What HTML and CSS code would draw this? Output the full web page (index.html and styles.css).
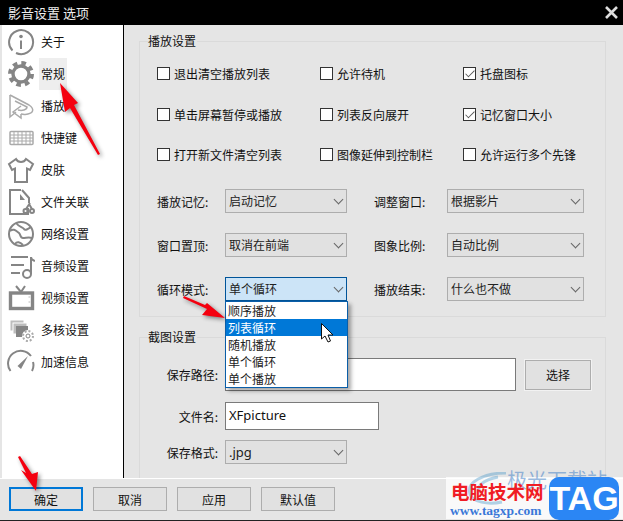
FILE: index.html
```html
<!DOCTYPE html>
<html lang="zh-CN">
<head>
    <meta charset="UTF-8">
    <meta name="viewport" content="width=device-width, initial-scale=1.0">
    <title>影音设置 选项</title>
    <link rel="stylesheet" href="styles.css">
</head>
<body>
    <div class="window">
        <div class="titlebar">
            <span class="title">影音设置 选项</span>
            <svg class="close" width="13" height="13" viewBox="0 0 13 13"><path d="M1 1L12 12M12 1L1 12"/></svg>
        </div>

        <div class="main">
            <!-- 左侧菜单 -->
            <ul class="sidebar">
                <li>
                    <svg class="icon" viewBox="0 0 28 28"><path d="M5.5 22.5A12 12 0 1 1 9 25"/><circle class="fill" cx="14" cy="8.5" r="1.8"/><path d="M14 12.5V21"/></svg>
                    <span>关于</span>
                </li>
                <li>
                    <svg class="icon" viewBox="0 0 28 28"><circle class="thick" cx="14" cy="14" r="8"/><circle class="teeth" cx="14" cy="14" r="11"/></svg>
                    <span class="active">常规</span>
                </li>
                <li>
                    <svg class="icon pale" viewBox="0 0 28 28"><path d="M3 3V25L9 20"/><path d="M3 3L22 13C28 17 26 21 21 22C18 23 16 22 14 22"/><path d="M8 9L20 15C20 18 15 19 11 18"/><path d="M14 14L6 20L14 26V22"/></svg>
                    <span>播放</span>
                </li>
                <li>
                    <svg class="icon pale" viewBox="0 0 28 28"><rect x="3" y="7.5" width="23" height="13" rx="1"/><path class="thin" d="M3 11H26M3 14H26M3 17H26M7 8V20M11 8V20M15 8V20M19 8V20M23 8V20"/></svg>
                    <span>快捷键</span>
                </li>
                <li>
                    <svg class="icon" viewBox="0 0 28 28"><path d="M9 3L2 8L5 14L8 12.5V26H20V12.5L23 14L26 8L19 3C17 7 11 7 9 3Z"/></svg>
                    <span>皮肤</span>
                </li>
                <li>
                    <svg class="icon" viewBox="0 0 28 28"><path d="M14 2H3V26H21V20"/><path d="M15 2L22 10V15"/><path class="fill" d="M13 6L18 12H13Z"/><circle cx="18.5" cy="23" r="2"/><circle cx="25" cy="23" r="2"/><path d="M19 21L23 15M25 21L22 16"/></svg>
                    <span>文件关联</span>
                </li>
                <li>
                    <svg class="icon" viewBox="0 0 28 28"><circle cx="14" cy="14" r="12"/><path d="M3 11C7 8 9 11 12 13C14 15 13 18 16 18C19 18 22 17 25 18"/><path d="M9 3C12 7 16 7 17 9C18 11 21 9 24 7"/><path d="M8 24C10 21 13 22 16 25"/></svg>
                    <span>网络设置</span>
                </li>
                <li>
                    <svg class="icon" viewBox="0 0 28 28"><path d="M4 5H21M4 13H17M4 21H13"/><circle cx="20" cy="22" r="4"/><path d="M24 22V5C24 8 26 8 28 9"/></svg>
                    <span>音频设置</span>
                </li>
                <li>
                    <svg class="icon" viewBox="0 0 28 28"><rect class="thick" x="3.5" y="9" width="22" height="15.5"/><path d="M9 2L14 8L18 2"/><path class="light" d="M22.5 12V14M22.5 17V19"/></svg>
                    <span>视频设置</span>
                </li>
                <li>
                    <svg class="icon" viewBox="0 0 28 28"><rect class="pale-fill" x="3" y="4" width="14" height="11"/><rect class="pale-fill" x="6" y="7" width="14" height="11"/><rect class="fill" x="9" y="10" width="12" height="11"/><circle class="gear-bg" cx="21" cy="20" r="6"/><circle class="teeth small" cx="21" cy="20" r="5"/><circle class="thin" cx="21" cy="20" r="2"/></svg>
                    <span>多核设置</span>
                </li>
                <li>
                    <svg class="icon" viewBox="0 0 28 28"><path d="M3.5 23A12 12 0 0 1 24 8"/><path d="M26 14A12 12 0 0 1 25 23"/><path class="fill" d="M21 8L14 21L10.5 18Z"/></svg>
                    <span>加速信息</span>
                </li>
            </ul>

            <div class="content">
                <fieldset class="group">
                    <legend>播放设置</legend>
                    <div class="checks">
                        <label class="check"><i class="box"></i>退出清空播放列表</label>
                        <label class="check"><i class="box"></i>允许待机</label>
                        <label class="check"><i class="box checked"></i>托盘图标</label>
                        <label class="check"><i class="box"></i>单击屏幕暂停或播放</label>
                        <label class="check"><i class="box"></i>列表反向展开</label>
                        <label class="check"><i class="box checked"></i>记忆窗口大小</label>
                        <label class="check"><i class="box"></i>打开新文件清空列表</label>
                        <label class="check"><i class="box"></i>图像延伸到控制栏</label>
                        <label class="check"><i class="box"></i>允许运行多个先锋</label>
                    </div>
                    <div class="options">
                        <span class="opt-label">播放记忆:</span>
                        <div class="select">启动记忆</div>
                        <span class="opt-label">调整窗口:</span>
                        <div class="select">根据影片</div>
                        <span class="opt-label">窗口置顶:</span>
                        <div class="select">取消在前端</div>
                        <span class="opt-label">图象比例:</span>
                        <div class="select">自动比例</div>
                        <span class="opt-label">循环模式:</span>
                        <div class="select open">单个循环
                            <ul class="dropdown">
                                <li>顺序播放</li>
                                <li class="selected">列表循环</li>
                                <li>随机播放</li>
                                <li>单个循环</li>
                                <li>单个播放</li>
                            </ul>
                        </div>
                        <span class="opt-label">播放结束:</span>
                        <div class="select">什么也不做</div>
                    </div>
                </fieldset>

                <fieldset class="group shot">
                    <legend>截图设置</legend>
                    <div class="form-row path-row">
                        <span class="form-label">保存路径:</span>
                        <div class="input path"></div>
                        <button class="btn pick">选择</button>
                    </div>
                    <div class="form-row name-row">
                        <span class="form-label">文件名:</span>
                        <div class="input name">XFpicture</div>
                    </div>
                    <div class="form-row format-row">
                        <span class="form-label">保存格式:</span>
                        <div class="select format latin">.jpg</div>
                    </div>
                </fieldset>
            </div>
        </div>

        <div class="footer">
            <button class="btn default">确定</button>
            <button class="btn">取消</button>
            <button class="btn">应用</button>
            <button class="btn">默认值</button>
        </div>

        <!-- 红色箭头和鼠标 -->
        <svg class="overlay" width="623" height="521" viewBox="0 0 623 521">
            <g class="arrows">
                <path d="M60 83L78 103L74 105L100 154L98 155L70 108L65 112Z"/>
                <path d="M225 318L202 315L207 309L183 298L184 296L205 305L207 303Z"/>
                <path d="M36 491L21 470L26 473L18 457L20 456L32 474L38 472Z"/>
            </g>
            <path class="pointer" d="M321.5 323.5V339L325 336L328 342L330.5 341L328 335H333Z"/>
        </svg>

        <!-- 水印 -->
        <div class="watermark">
            <svg class="wm-swirl" width="44" height="36" viewBox="0 0 44 36"><path d="M42 1C20 1 2 10 6 22C8 30 24 33 38 30"/><path d="M34 5C18 8 12 15 16 21"/></svg>
            <span class="wm-back">极光下载站</span>
            <span class="wm-cn">电脑技术网</span>
            <span class="wm-url">www.tagxp.com</span>
            <span class="wm-tag">TAG</span>
        </div>
    </div>
</body>
</html>
```

FILE: styles.css
```css
* {
    box-sizing: border-box;
}
body {
    margin: 0;
    font-family: "Noto Sans CJK SC", "Noto Sans", sans-serif;
    font-size: 12px;
    color: #111;
    background: #e5e5e5;
}
ul {
    list-style: none;
    margin: 0;
    padding: 0;
}
.window {
    position: relative;
    width: 623px;
    height: 521px;
    overflow: hidden;
    display: flex;
    flex-direction: column;
    border-bottom: 1px solid #222;
}
.titlebar {
    height: 25px;
    flex: none;
    background: #000;
    color: #eee;
    display: flex;
    align-items: center;
    justify-content: space-between;
    padding: 0 5px 0 8px;
}
.title {
    font-size: 13px;
}
.close path {
    stroke: #ddd;
    stroke-width: 2.6;
    fill: none;
}
.main {
    flex: none;
    height: 454px;
    display: flex;
    border-bottom: 1px solid #fff;
    padding-left: 2px;
}

/* 左侧菜单 */
.sidebar {
    width: 122px;
    flex: none;
    background: #fff;
    border-right: 1px solid #000;
    padding-top: 1px;
}
.sidebar li {
    height: 32px;
    display: flex;
    align-items: center;
    gap: 4px;
    padding-left: 5px;
}
.sidebar span {
    height: 32px;
    line-height: 32px;
    padding: 0 2px;
}
.sidebar .active {
    background: #eee;
}
.icon {
    width: 28px;
    height: 28px;
    flex: none;
}
.icon path, .icon circle, .icon rect {
    fill: none;
    stroke: #858585;
    stroke-width: 2;
}
.icon .thick {
    stroke-width: 3.4;
}
.icon .thin {
    stroke-width: 1;
}
.icon .light {
    stroke: #ddd;
    stroke-width: 2;
}
.icon .fill {
    fill: #858585;
    stroke: none;
}
.icon .teeth {
    stroke-width: 4;
    stroke-dasharray: 4.6 4.04;
}
.icon .teeth.small {
    stroke: #aaa;
    stroke-width: 2;
    stroke-dasharray: 2 1.9;
}
.icon .gear-bg {
    fill: #fff;
    stroke: none;
}
.icon .pale-fill {
    fill: #bdbdbd;
    stroke: #fff;
    stroke-width: 1;
}
.icon.pale path, .icon.pale rect {
    stroke: #aaa;
    stroke-width: 1.5;
}
.icon.pale .thin {
    stroke-width: 1;
}

/* 右侧内容 */
.content {
    flex: 1;
    padding: 8px 17px 0 15px;
    overflow: hidden;
}
.group {
    margin: 0;
    padding: 0 0 15px;
    border: 1px solid #dadada;
    min-width: 0;
}
.group legend {
    margin-left: 8px;
    padding: 0 1px 0 0;
    line-height: 16px;
    height: 16px;
}
.checks {
    display: grid;
    grid-template-columns: 163px 143px 1fr;
    grid-template-rows: 41px 40px 40px;
    align-items: center;
    margin-top: 4px;
    padding-left: 17px;
}
.check {
    display: flex;
    align-items: center;
    gap: 4px;
}
.box {
    width: 13px;
    height: 13px;
    border: 1px solid #333;
    background: #fff;
    position: relative;
}
.box.checked::after {
    content: "";
    position: absolute;
    left: 1px;
    top: 2px;
    width: 9px;
    height: 4px;
    border-left: 1.5px solid #555;
    border-bottom: 1.5px solid #555;
    transform: rotate(-45deg) scale(0.9);
}
.options {
    display: grid;
    grid-template-columns: 68px 122px 27px 73px 137px;
    grid-auto-rows: 24px;
    row-gap: 20px;
    align-items: center;
    margin-top: 15px;
    padding-left: 17px;
}
.opt-label:nth-child(4n+3) {
    grid-column: 4;
}
.select {
    position: relative;
    height: 24px;
    line-height: 22px;
    padding-left: 3px;
    background: #e1e1e1;
    border: 1px solid #adadad;
    color: #222;
}
/* 下拉小箭头 */
.select::after {
    content: "";
    position: absolute;
    right: 4px;
    top: 6px;
    width: 6px;
    height: 6px;
    border-right: 1px solid #666;
    border-bottom: 1px solid #666;
    transform: rotate(45deg);
}
.select.open {
    background: #cce4f7;
    border-color: #005499;
}
.dropdown {
    position: absolute;
    z-index: 2;
    left: -1px;
    top: 23px;
    width: 123px;
    height: 87px;
    background: #fff;
    border: 1px solid #0a5ea8;
    box-shadow: 3px 3px 4px rgba(0, 0, 0, 0.35);
}
.dropdown li {
    height: 17px;
    line-height: 17px;
    padding-left: 2px;
}
.dropdown .selected {
    background: #0078d7;
    color: #fff;
}
.shot {
    margin-top: 12px;
    height: 200px;
}
.form-row {
    display: flex;
    align-items: center;
}
.form-label {
    width: 78px;
    text-align: right;
    margin-right: 7px;
    flex: none;
}
.input {
    background: #fff;
    border: 1px solid #7a7a7a;
    font-family: "Noto Sans", sans-serif;
    font-size: 13px;
    padding-left: 3px;
}
.path-row {
    margin-top: 13px;
}
.path {
    width: 291px;
    height: 33px;
}
.name-row {
    margin-top: 11px;
}
.name {
    width: 154px;
    height: 28px;
    line-height: 25px;
}
.format-row {
    margin-top: 10px;
}
.format {
    width: 122px;
}
.latin {
    font-family: "Noto Sans", sans-serif;
    font-size: 13px;
}

/* 底部按钮 */
.footer {
    flex: 1;
    display: flex;
    align-items: flex-start;
    gap: 10px;
    padding: 8px 0 0 9px;
}
.btn {
    width: 74px;
    height: 24px;
    padding: 0;
    background: #e1e1e1;
    border: 1px solid #adadad;
    font: inherit;
    color: #111;
}
.btn.default {
    border: 2px solid #0078d7;
}
.btn.pick {
    width: 66px;
    height: 30px;
    margin-left: 9px;
    outline: 1px solid #f2f2f2;
}

.overlay {
    position: absolute;
    left: 0;
    top: 0;
    z-index: 3;
}
.arrows path {
    fill: #f4000f;
    filter: drop-shadow(2px 2px 2px rgba(0, 0, 0, 0.45));
}
.pointer {
    fill: #fff;
    stroke: #111;
    stroke-width: 1;
}

/* 水印 */
.watermark {
    position: absolute;
    z-index: 4;
    left: 446px;
    top: 477px;
    width: 177px;
    height: 42px;
    background: rgba(255, 255, 255, 0.78);
}
.wm-swirl {
    position: absolute;
    left: 18px;
    top: -5px;
}
.wm-swirl path {
    fill: none;
    stroke: rgba(70, 150, 200, 0.4);
    stroke-width: 3;
}
.wm-back {
    position: absolute;
    left: 61px;
    top: -8px;
    font-size: 20px;
    line-height: 22px;
    white-space: nowrap;
    color: rgba(70, 130, 200, 0.55);
}
.wm-cn {
    position: absolute;
    left: 5px;
    top: 3px;
    font-size: 18.5px;
    line-height: 22px;
    font-weight: 700;
    color: #f01c24;
    white-space: nowrap;
}
.wm-url {
    position: absolute;
    left: 4px;
    top: 26px;
    font-family: "Liberation Serif", serif;
    font-size: 13.5px;
    line-height: 15px;
    font-weight: 700;
    color: #3a78d8;
}
.wm-tag {
    position: absolute;
    left: 103px;
    top: 0;
    width: 70px;
    height: 43px;
    border-radius: 10px;
    background: #2b86f4;
    color: #fff;
    font-family: "Liberation Sans", sans-serif;
    font-size: 34px;
    font-weight: 700;
    line-height: 43px;
    text-align: center;
}
```
